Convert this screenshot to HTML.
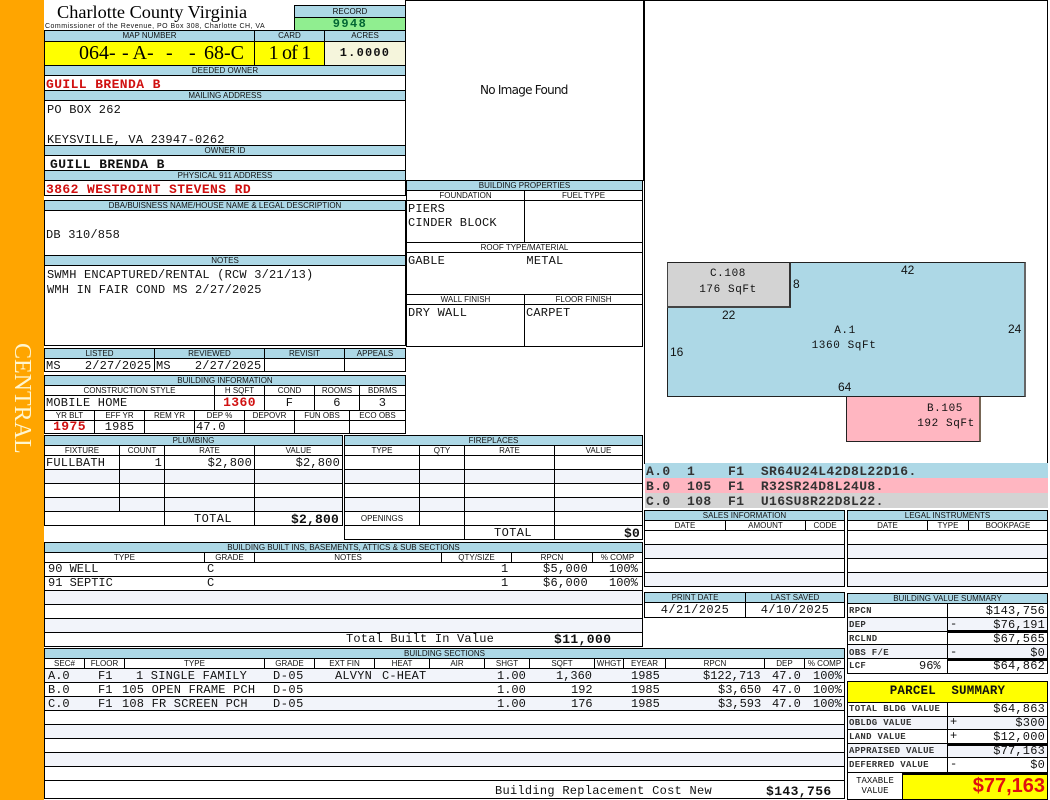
<!DOCTYPE html>
<html><head><meta charset="utf-8"><title>Charlotte County Virginia</title>
<style>
html,body{margin:0;padding:0;background:#fff}
body{position:relative;width:1050px;height:800px;overflow:hidden;color:#111;font-family:"Liberation Sans",sans-serif}
div{position:absolute;box-sizing:border-box;white-space:pre}
.c{border:1px solid #000;overflow:hidden;background:#fff;font:12px/15px "Liberation Mono",monospace;letter-spacing:.2px;padding:0 1px}
.h,.w{border:1px solid #000;overflow:hidden;font:8px/9px "Liberation Sans",sans-serif;text-align:center;color:#111;padding:0}
.h{background:#add8e6}.w{background:#fff}
.z{background:#f2f4fa}
.r{text-align:right;padding-right:2px}.m{text-align:center}
.red{color:#d01010;font-weight:bold;font-size:13px;letter-spacing:.4px}
.b{font-weight:bold}
.s{font:bold 9px/15px "Liberation Mono",monospace;letter-spacing:.3px;color:#333}
.n{font:11px/13px "Liberation Mono",monospace;letter-spacing:.6px;color:#111;text-align:center}
.d{font:12px/13px "Liberation Sans",sans-serif;color:#111}
.l{font:bold 13px/15px "Liberation Mono",monospace;letter-spacing:.4px;padding:1px 0 0 1px;color:#333;left:645px;width:403px;height:15px}
.t{font:12px/13px "Liberation Mono",monospace}
.y{font:20px/22px "Liberation Serif",serif;color:#000;top:42px}
.bar{background:#000;left:947px;width:101px;height:3px}
.mi{font:12px/13px "Liberation Mono",monospace;left:950px}
</style></head><body>

<div style="left:0;top:0;width:44px;height:800px;background:#ffa500"></div>
<div style="left:10px;top:343px;width:24px;height:116px;writing-mode:vertical-rl;font:24px/24px 'Liberation Serif',serif;color:#fff6d0">CENTRAL</div>

<div style="left:57px;top:1px;font:18.3px/22px 'Liberation Serif',serif;color:#000">Charlotte County Virginia</div>
<div style="left:45px;top:22px;font:7px/9px 'Liberation Sans',sans-serif;letter-spacing:.48px;color:#111">Commissioner of the Revenue, PO Box 308, Charlotte CH, VA</div>

<div class="h" style="left:294px;top:5px;width:112px;height:13px;line-height:11px">RECORD</div>
<div class="c b m" style="left:294px;top:17px;width:112px;height:14px;background:#90ee90;letter-spacing:1.4px;line-height:13px;color:#063">9948</div>

<div class="h" style="left:44px;top:30px;width:211px;height:12px">MAP NUMBER</div>
<div class="h" style="left:254px;top:30px;width:71px;height:12px">CARD</div>
<div class="h" style="left:324px;top:30px;width:82px;height:12px">ACRES</div>
<div class="c" style="left:44px;top:41px;width:211px;height:25px;background:#ff0"></div>
<div class="y" style="left:79px">064-</div>
<div class="y" style="left:122px">- A-</div>
<div class="y" style="left:166px">-</div>
<div class="y" style="left:189px">-</div>
<div class="y" style="left:204px">68-C</div>
<div class="c m" style="left:254px;top:41px;width:71px;height:25px;background:#ff0;font:20px/22px 'Liberation Serif',serif;letter-spacing:-.8px;color:#000">1 of 1</div>
<div class="c b m" style="left:324px;top:41px;width:82px;height:25px;background:#f5f5dc;line-height:22px;letter-spacing:1.2px">1.0000</div>

<div class="h" style="left:44px;top:65px;width:362px;height:11px">DEEDED OWNER</div>
<div class="c red" style="left:44px;top:75px;width:362px;height:16px;line-height:18px">GUILL BRENDA B</div>
<div class="h" style="left:44px;top:90px;width:362px;height:11px">MAILING ADDRESS</div>
<div class="c" style="left:44px;top:100px;width:362px;height:46px;padding:2px 0 0 2px;line-height:15px">PO BOX 262

KEYSVILLE, VA 23947-0262</div>
<div class="h" style="left:44px;top:145px;width:362px;height:11px">OWNER ID</div>
<div class="c b" style="left:44px;top:155px;width:362px;height:16px;font-size:13px;line-height:18px;letter-spacing:.4px;padding-left:5px">GUILL BRENDA B</div>
<div class="h" style="left:44px;top:170px;width:362px;height:11px">PHYSICAL 911 ADDRESS</div>
<div class="c red" style="left:44px;top:180px;width:362px;height:16px;line-height:18px">3862 WESTPOINT STEVENS RD</div>

<div class="h" style="left:44px;top:200px;width:362px;height:11px">DBA/BUISNESS NAME/HOUSE NAME &amp; LEGAL DESCRIPTION</div>
<div class="c" style="left:44px;top:210px;width:362px;height:46px;line-height:48px">DB 310/858</div>
<div class="h" style="left:44px;top:255px;width:362px;height:11px">NOTES</div>
<div class="c" style="left:44px;top:265px;width:362px;height:81px;padding:2px 0 0 2px;line-height:15px">SWMH ENCAPTURED/RENTAL (RCW 3/21/13)
WMH IN FAIR COND MS 2/27/2025</div>

<div class="h" style="left:44px;top:348px;width:111px;height:11px">LISTED</div>
<div class="h" style="left:154px;top:348px;width:111px;height:11px">REVIEWED</div>
<div class="h" style="left:264px;top:348px;width:81px;height:11px">REVISIT</div>
<div class="h" style="left:344px;top:348px;width:62px;height:11px">APPEALS</div>
<div class="c" style="left:44px;top:358px;width:111px;height:14px;line-height:14px">MS<span style="margin-left:24px">2/27/2025</span></div>
<div class="c" style="left:154px;top:358px;width:111px;height:14px;line-height:14px">MS<span style="margin-left:24px">2/27/2025</span></div>
<div class="c" style="left:264px;top:358px;width:81px;height:14px"></div>
<div class="c" style="left:344px;top:358px;width:62px;height:14px"></div>

<div class="h" style="left:44px;top:375px;width:362px;height:11px">BUILDING INFORMATION</div>
<div class="w" style="left:44px;top:385px;width:171px;height:11px">CONSTRUCTION STYLE</div>
<div class="w" style="left:214px;top:385px;width:51px;height:11px">H SQFT</div>
<div class="w" style="left:264px;top:385px;width:51px;height:11px">COND</div>
<div class="w" style="left:314px;top:385px;width:46px;height:11px">ROOMS</div>
<div class="w" style="left:359px;top:385px;width:47px;height:11px">BDRMS</div>
<div class="c" style="left:44px;top:395px;width:171px;height:16px;line-height:14px">MOBILE HOME</div>
<div class="c red m" style="left:214px;top:395px;width:51px;height:16px;line-height:14px">1360</div>
<div class="c m" style="left:264px;top:395px;width:51px;height:16px;line-height:14px">F</div>
<div class="c m" style="left:314px;top:395px;width:46px;height:16px;line-height:14px">6</div>
<div class="c m" style="left:359px;top:395px;width:47px;height:16px;line-height:14px">3</div>
<div class="w" style="left:44px;top:410px;width:51px;height:11px">YR BLT</div>
<div class="w" style="left:94px;top:410px;width:51px;height:11px">EFF YR</div>
<div class="w" style="left:144px;top:410px;width:51px;height:11px">REM YR</div>
<div class="w" style="left:194px;top:410px;width:51px;height:11px">DEP %</div>
<div class="w" style="left:244px;top:410px;width:51px;height:11px">DEPOVR</div>
<div class="w" style="left:294px;top:410px;width:56px;height:11px">FUN OBS</div>
<div class="w" style="left:349px;top:410px;width:57px;height:11px">ECO OBS</div>
<div class="c red m" style="left:44px;top:420px;width:51px;height:14px;line-height:12px">1975</div>
<div class="c m" style="left:94px;top:420px;width:51px;height:14px;line-height:12px">1985</div>
<div class="c" style="left:144px;top:420px;width:51px;height:14px"></div>
<div class="c" style="left:194px;top:420px;width:51px;height:14px;line-height:12px">47.0</div>
<div class="c" style="left:244px;top:420px;width:51px;height:14px"></div>
<div class="c" style="left:294px;top:420px;width:56px;height:14px"></div>
<div class="c" style="left:349px;top:420px;width:57px;height:14px"></div>

<div class="h" style="left:44px;top:435px;width:299px;height:11px">PLUMBING</div>
<div class="w" style="left:44px;top:445px;width:76px;height:11px">FIXTURE</div>
<div class="w" style="left:119px;top:445px;width:46px;height:11px">COUNT</div>
<div class="w" style="left:164px;top:445px;width:91px;height:11px">RATE</div>
<div class="w" style="left:254px;top:445px;width:89px;height:11px">VALUE</div>
<div class="c" style="left:44px;top:455px;width:76px;height:15px">FULLBATH</div>
<div class="c r" style="left:119px;top:455px;width:46px;height:15px">1</div>
<div class="c r" style="left:164px;top:455px;width:91px;height:15px">$2,800</div>
<div class="c r" style="left:254px;top:455px;width:89px;height:15px">$2,800</div>
<div class="c z" style="left:44px;top:469px;width:76px;height:15px"></div>
<div class="c z" style="left:119px;top:469px;width:46px;height:15px"></div>
<div class="c z" style="left:164px;top:469px;width:91px;height:15px"></div>
<div class="c z" style="left:254px;top:469px;width:89px;height:15px"></div>
<div class="c" style="left:44px;top:483px;width:76px;height:15px"></div>
<div class="c" style="left:119px;top:483px;width:46px;height:15px"></div>
<div class="c" style="left:164px;top:483px;width:91px;height:15px"></div>
<div class="c" style="left:254px;top:483px;width:89px;height:15px"></div>
<div class="c z" style="left:44px;top:497px;width:76px;height:15px"></div>
<div class="c z" style="left:119px;top:497px;width:46px;height:15px"></div>
<div class="c z" style="left:164px;top:497px;width:91px;height:15px"></div>
<div class="c z" style="left:254px;top:497px;width:89px;height:15px"></div>
<div class="c" style="left:44px;top:511px;width:121px;height:15px"></div>
<div class="c m" style="left:164px;top:511px;width:91px;height:15px;padding-left:8px;letter-spacing:.4px">TOTAL</div>
<div class="c b r" style="left:254px;top:511px;width:89px;height:15px;font-size:13px;padding-right:3px">$2,800</div>

<div class="h" style="left:344px;top:435px;width:299px;height:11px">FIREPLACES</div>
<div class="w" style="left:344px;top:445px;width:76px;height:11px">TYPE</div>
<div class="w" style="left:419px;top:445px;width:46px;height:11px">QTY</div>
<div class="w" style="left:464px;top:445px;width:91px;height:11px">RATE</div>
<div class="w" style="left:554px;top:445px;width:89px;height:11px">VALUE</div>
<div class="c" style="left:344px;top:455px;width:76px;height:15px"></div>
<div class="c" style="left:419px;top:455px;width:46px;height:15px"></div>
<div class="c" style="left:464px;top:455px;width:91px;height:15px"></div>
<div class="c" style="left:554px;top:455px;width:89px;height:15px"></div>
<div class="c z" style="left:344px;top:469px;width:76px;height:15px"></div>
<div class="c z" style="left:419px;top:469px;width:46px;height:15px"></div>
<div class="c z" style="left:464px;top:469px;width:91px;height:15px"></div>
<div class="c z" style="left:554px;top:469px;width:89px;height:15px"></div>
<div class="c" style="left:344px;top:483px;width:76px;height:15px"></div>
<div class="c" style="left:419px;top:483px;width:46px;height:15px"></div>
<div class="c" style="left:464px;top:483px;width:91px;height:15px"></div>
<div class="c" style="left:554px;top:483px;width:89px;height:15px"></div>
<div class="c z" style="left:344px;top:497px;width:76px;height:15px"></div>
<div class="c z" style="left:419px;top:497px;width:46px;height:15px"></div>
<div class="c z" style="left:464px;top:497px;width:91px;height:15px"></div>
<div class="c z" style="left:554px;top:497px;width:89px;height:15px"></div>
<div class="w" style="left:344px;top:511px;width:76px;height:15px;line-height:13px">OPENINGS</div>
<div class="c" style="left:419px;top:511px;width:46px;height:15px"></div>
<div class="c" style="left:464px;top:511px;width:91px;height:15px"></div>
<div class="c" style="left:554px;top:511px;width:89px;height:15px"></div>
<div class="c" style="left:344px;top:525px;width:121px;height:15px"></div>
<div class="c m" style="left:464px;top:525px;width:91px;height:15px;padding-left:8px;letter-spacing:.4px">TOTAL</div>
<div class="c b r" style="left:554px;top:525px;width:89px;height:15px;font-size:13px;padding-right:2px">$0</div>

<div class="h" style="left:44px;top:542px;width:599px;height:11px">BUILDING BUILT INS, BASEMENTS, ATTICS &amp; SUB SECTIONS</div>
<div class="w" style="left:44px;top:552px;width:161px;height:11px">TYPE</div>
<div class="w" style="left:204px;top:552px;width:51px;height:11px">GRADE</div>
<div class="w" style="left:254px;top:552px;width:188px;height:11px">NOTES</div>
<div class="w" style="left:441px;top:552px;width:71px;height:11px">QTY/SIZE</div>
<div class="w" style="left:511px;top:552px;width:82px;height:11px">RPCN</div>
<div class="w" style="left:592px;top:552px;width:51px;height:11px">% COMP</div>
<div class="c" style="left:44px;top:562px;width:599px;height:15px;padding-left:3px"></div>
<div class="c" style="left:44px;top:576px;width:599px;height:15px"></div>
<div class="c z" style="left:44px;top:590px;width:599px;height:15px"></div>
<div class="c" style="left:44px;top:604px;width:599px;height:15px"></div>
<div class="c z" style="left:44px;top:618px;width:599px;height:15px"></div>
<div class="c" style="left:44px;top:632px;width:599px;height:15px"></div>
<div class="t" style="left:48px;top:563px">90 WELL</div>
<div class="t" style="left:48px;top:577px">91 SEPTIC</div>
<div class="t" style="left:207px;top:563px">C</div>
<div class="t" style="left:207px;top:577px">C</div>
<div class="t" style="left:501px;top:563px">1</div>
<div class="t" style="left:501px;top:577px">1</div>
<div class="t" style="left:543px;top:563px;letter-spacing:.3px">$5,000</div>
<div class="t" style="left:543px;top:577px;letter-spacing:.3px">$6,000</div>
<div class="t" style="left:609px;top:563px">100%</div>
<div class="t" style="left:609px;top:577px">100%</div>
<div class="t" style="left:346px;top:633px;letter-spacing:.2px">Total Built In Value</div>
<div style="left:554px;top:633px;font:bold 13px/13px 'Liberation Mono',monospace;letter-spacing:.4px">$11,000</div>

<div class="h" style="left:44px;top:648px;width:801px;height:11px">BUILDING SECTIONS</div>
<div class="w" style="left:44px;top:658px;width:41px;height:11px">SEC#</div>
<div class="w" style="left:84px;top:658px;width:41px;height:11px">FLOOR</div>
<div class="w" style="left:124px;top:658px;width:141px;height:11px">TYPE</div>
<div class="w" style="left:264px;top:658px;width:51px;height:11px">GRADE</div>
<div class="w" style="left:314px;top:658px;width:61px;height:11px">EXT FIN</div>
<div class="w" style="left:374px;top:658px;width:56px;height:11px">HEAT</div>
<div class="w" style="left:429px;top:658px;width:56px;height:11px">AIR</div>
<div class="w" style="left:484px;top:658px;width:46px;height:11px">SHGT</div>
<div class="w" style="left:529px;top:658px;width:66px;height:11px">SQFT</div>
<div class="w" style="left:594px;top:658px;width:30px;height:11px">WHGT</div>
<div class="w" style="left:623px;top:658px;width:43px;height:11px">EYEAR</div>
<div class="w" style="left:665px;top:658px;width:100px;height:11px">RPCN</div>
<div class="w" style="left:764px;top:658px;width:41px;height:11px">DEP</div>
<div class="w" style="left:804px;top:658px;width:41px;height:11px">% COMP</div>
<div class="c z" style="left:44px;top:668px;width:801px;height:15px"></div>
<div class="c" style="left:44px;top:682px;width:801px;height:15px"></div>
<div class="c z" style="left:44px;top:696px;width:801px;height:15px"></div>
<div class="c" style="left:44px;top:710px;width:801px;height:15px"></div>
<div class="c z" style="left:44px;top:724px;width:801px;height:15px"></div>
<div class="c" style="left:44px;top:738px;width:801px;height:15px"></div>
<div class="c z" style="left:44px;top:752px;width:801px;height:15px"></div>
<div class="c" style="left:44px;top:766px;width:801px;height:15px"></div>
<div class="c" style="left:44px;top:780px;width:801px;height:19px"></div>
<div class="t" style="left:48px;top:670px">A.0</div>
<div class="t" style="left:98px;top:670px">F1</div>
<div class="t" style="left:136px;top:670px;letter-spacing:.2px">1 SINGLE FAMILY</div>
<div class="t" style="left:273px;top:670px;letter-spacing:.5px">D-05</div>
<div class="t" style="left:335px;top:670px;letter-spacing:.2px">ALVYN</div>
<div class="t" style="left:382px;top:670px;letter-spacing:.2px">C-HEAT</div>
<div class="t" style="left:497px;top:670px">1.00</div>
<div class="t" style="left:556px;top:670px">1,360</div>
<div class="t" style="left:631px;top:670px">1985</div>
<div class="t" style="left:703px;top:670px">$122,713</div>
<div class="t" style="left:772px;top:670px">47.0</div>
<div class="t" style="left:813px;top:670px">100%</div>
<div class="t" style="left:48px;top:684px">B.0</div>
<div class="t" style="left:98px;top:684px">F1</div>
<div class="t" style="left:122px;top:684px;letter-spacing:.2px">105 OPEN FRAME PCH</div>
<div class="t" style="left:273px;top:684px;letter-spacing:.5px">D-05</div>
<div class="t" style="left:497px;top:684px">1.00</div>
<div class="t" style="left:571px;top:684px">192</div>
<div class="t" style="left:631px;top:684px">1985</div>
<div class="t" style="left:718px;top:684px">$3,650</div>
<div class="t" style="left:772px;top:684px">47.0</div>
<div class="t" style="left:813px;top:684px">100%</div>
<div class="t" style="left:48px;top:698px">C.0</div>
<div class="t" style="left:98px;top:698px">F1</div>
<div class="t" style="left:122px;top:698px;letter-spacing:.2px">108 FR SCREEN PCH</div>
<div class="t" style="left:273px;top:698px;letter-spacing:.5px">D-05</div>
<div class="t" style="left:497px;top:698px">1.00</div>
<div class="t" style="left:571px;top:698px">176</div>
<div class="t" style="left:631px;top:698px">1985</div>
<div class="t" style="left:718px;top:698px">$3,593</div>
<div class="t" style="left:772px;top:698px">47.0</div>
<div class="t" style="left:813px;top:698px">100%</div>
<div class="t" style="left:495px;top:785px;letter-spacing:.28px">Building Replacement Cost New</div>
<div style="left:766px;top:785px;font:bold 13px/13px 'Liberation Mono',monospace;letter-spacing:.4px">$143,756</div>

<div style="left:405px;top:0;width:240px;height:181px;border:1px solid #000;border-right:2px solid #000"></div>
<div style="left:480px;top:83px;font:12px/14px 'DejaVu Sans',sans-serif;letter-spacing:-.75px">No Image Found</div>

<div class="h" style="left:406px;top:180px;width:237px;height:11px">BUILDING PROPERTIES</div>
<div class="w" style="left:406px;top:190px;width:119px;height:11px">FOUNDATION</div>
<div class="w" style="left:524px;top:190px;width:119px;height:11px">FUEL TYPE</div>
<div class="c" style="left:406px;top:200px;width:119px;height:43px;padding-left:1px;line-height:14px;padding-top:1px">PIERS
CINDER BLOCK</div>
<div class="c" style="left:524px;top:200px;width:119px;height:43px"></div>
<div class="w" style="left:406px;top:242px;width:237px;height:11px">ROOF TYPE/MATERIAL</div>
<div class="c" style="left:406px;top:252px;width:237px;height:43px;line-height:14px;padding-top:1px">GABLE           METAL</div>
<div class="w" style="left:406px;top:294px;width:119px;height:11px">WALL FINISH</div>
<div class="w" style="left:524px;top:294px;width:119px;height:11px">FLOOR FINISH</div>
<div class="c" style="left:406px;top:304px;width:119px;height:43px;line-height:14px;padding-top:1px">DRY WALL</div>
<div class="c" style="left:524px;top:304px;width:119px;height:43px;line-height:14px;padding-top:1px">CARPET</div>

<div style="left:644px;top:0;width:404px;height:464px;border:1px solid #000"></div>
<div style="left:667px;top:262px;width:359px;height:135px;background:#add8e6;border:1px solid #222;border-right:2px solid #666"></div>
<div style="left:667px;top:262px;width:124px;height:46px;background:#d3d3d3;border:1px solid #222;border-width:1px 2px 2px 1px;border-color:#222 #333 #444 #444"></div>
<div style="left:846px;top:397px;width:135px;height:45px;background:#ffb6c1;border:1px solid #222;border-top:0;border-right:2px solid #765"></div>
<div class="n" style="left:698px;top:268px;width:60px">C.108</div>
<div class="n" style="left:688px;top:284px;width:80px">176 SqFt</div>
<div class="n" style="left:805px;top:325px;width:80px">A.1</div>
<div class="n" style="left:804px;top:340px;width:80px">1360 SqFt</div>
<div class="n" style="left:905px;top:403px;width:80px">B.105</div>
<div class="n" style="left:906px;top:418px;width:80px">192 SqFt</div>
<div class="d" style="left:901px;top:264px">42</div>
<div class="d" style="left:793px;top:278px">8</div>
<div class="d" style="left:722px;top:309px">22</div>
<div class="d" style="left:1008px;top:323px">24</div>
<div class="d" style="left:670px;top:346px">16</div>
<div class="d" style="left:838px;top:381px">64</div>

<div class="l" style="top:463px;background:#add8e6">A.0  1    F1  SR64U24L42D8L22D16.</div>
<div class="l" style="top:478px;background:#ffb6c1">B.0  105  F1  R32SR24D8L24U8.</div>
<div class="l" style="top:493px;background:#d3d3d3">C.0  108  F1  U16SU8R22D8L22.</div>

<div class="h" style="left:644px;top:510px;width:201px;height:11px">SALES INFORMATION</div>
<div class="w" style="left:644px;top:520px;width:82px;height:11px">DATE</div>
<div class="w" style="left:725px;top:520px;width:81px;height:11px">AMOUNT</div>
<div class="w" style="left:805px;top:520px;width:40px;height:11px">CODE</div>
<div class="c" style="left:644px;top:530px;width:201px;height:15px"></div>
<div class="c z" style="left:644px;top:544px;width:201px;height:15px"></div>
<div class="c" style="left:644px;top:558px;width:201px;height:15px"></div>
<div class="c z" style="left:644px;top:572px;width:201px;height:15px"></div>

<div class="h" style="left:847px;top:510px;width:201px;height:11px">LEGAL INSTRUMENTS</div>
<div class="w" style="left:847px;top:520px;width:81px;height:11px">DATE</div>
<div class="w" style="left:927px;top:520px;width:42px;height:11px">TYPE</div>
<div class="w" style="left:968px;top:520px;width:80px;height:11px">BOOKPAGE</div>
<div class="c" style="left:847px;top:530px;width:201px;height:15px"></div>
<div class="c z" style="left:847px;top:544px;width:201px;height:15px"></div>
<div class="c" style="left:847px;top:558px;width:201px;height:15px"></div>
<div class="c z" style="left:847px;top:572px;width:201px;height:15px"></div>

<div class="h" style="left:644px;top:592px;width:102px;height:11px">PRINT DATE</div>
<div class="h" style="left:745px;top:592px;width:100px;height:11px">LAST SAVED</div>
<div class="c m" style="left:644px;top:602px;width:102px;height:16px;letter-spacing:.4px">4/21/2025</div>
<div class="c m" style="left:745px;top:602px;width:100px;height:16px;letter-spacing:.4px">4/10/2025</div>

<div class="h" style="left:847px;top:593px;width:201px;height:11px">BUILDING VALUE SUMMARY</div>
<div class="c s" style="left:847px;top:603px;width:101px;height:15px">RPCN</div>
<div class="c r" style="left:947px;top:603px;width:101px;height:15px">$143,756</div>
<div class="c s z" style="left:847px;top:617px;width:101px;height:15px">DEP</div>
<div class="c r z" style="left:947px;top:617px;width:101px;height:15px">$76,191</div>
<div class="c s" style="left:847px;top:631px;width:101px;height:14px;line-height:14px">RCLND</div>
<div class="c r" style="left:947px;top:631px;width:101px;height:14px;line-height:14px">$67,565</div>
<div class="c s z" style="left:847px;top:644px;width:101px;height:15px;line-height:16px">OBS F/E</div>
<div class="c r z" style="left:947px;top:644px;width:101px;height:15px;line-height:16px">$0</div>
<div class="c s" style="left:847px;top:658px;width:101px;height:16px;line-height:15px">LCF</div>
<div class="t" style="left:919px;top:660px">96%</div>
<div class="c r" style="left:947px;top:658px;width:101px;height:16px;line-height:15px">$64,862</div>
<div class="bar" style="top:630px"></div>
<div class="bar" style="top:658px"></div>
<div class="mi" style="top:618px">-</div>
<div class="mi" style="top:646px">-</div>

<div class="c b m" style="left:847px;top:681px;width:201px;height:22px;background:#ff0;font-size:12.5px;line-height:19px;letter-spacing:.2px">PARCEL  SUMMARY</div>
<div class="c s" style="left:847px;top:702px;width:101px;height:15px;line-height:13px">TOTAL BLDG VALUE</div>
<div class="c r" style="left:947px;top:702px;width:101px;height:15px;line-height:13px">$64,863</div>
<div class="c s z" style="left:847px;top:716px;width:101px;height:14px;line-height:12px">OBLDG VALUE</div>
<div class="c r z" style="left:947px;top:716px;width:101px;height:14px;line-height:12px">$300</div>
<div class="c s" style="left:847px;top:729px;width:101px;height:15px">LAND VALUE</div>
<div class="c r" style="left:947px;top:729px;width:101px;height:15px">$12,000</div>
<div class="c s z" style="left:847px;top:743px;width:101px;height:15px">APPRAISED VALUE</div>
<div class="c r z" style="left:947px;top:743px;width:101px;height:15px">$77,163</div>
<div class="c s" style="left:847px;top:757px;width:101px;height:16px;line-height:14px">DEFERRED VALUE</div>
<div class="c r" style="left:947px;top:757px;width:101px;height:16px;line-height:14px">$0</div>
<div class="bar" style="top:743px"></div>
<div class="mi" style="top:716px">+</div>
<div class="mi" style="top:730px">+</div>
<div class="mi" style="top:758px">-</div>
<div class="c s m" style="left:847px;top:772px;width:56px;height:28px;line-height:10px;padding-top:3px;letter-spacing:0;font-weight:normal;color:#111">TAXABLE
VALUE</div>
<div class="c r" style="left:902px;top:772px;width:146px;height:28px;background:#ff0;border-top-width:3px;color:#e01010;font:bold 20px/23px 'Liberation Sans',sans-serif;letter-spacing:0;padding-right:2px">$77,163</div>
</body></html>
